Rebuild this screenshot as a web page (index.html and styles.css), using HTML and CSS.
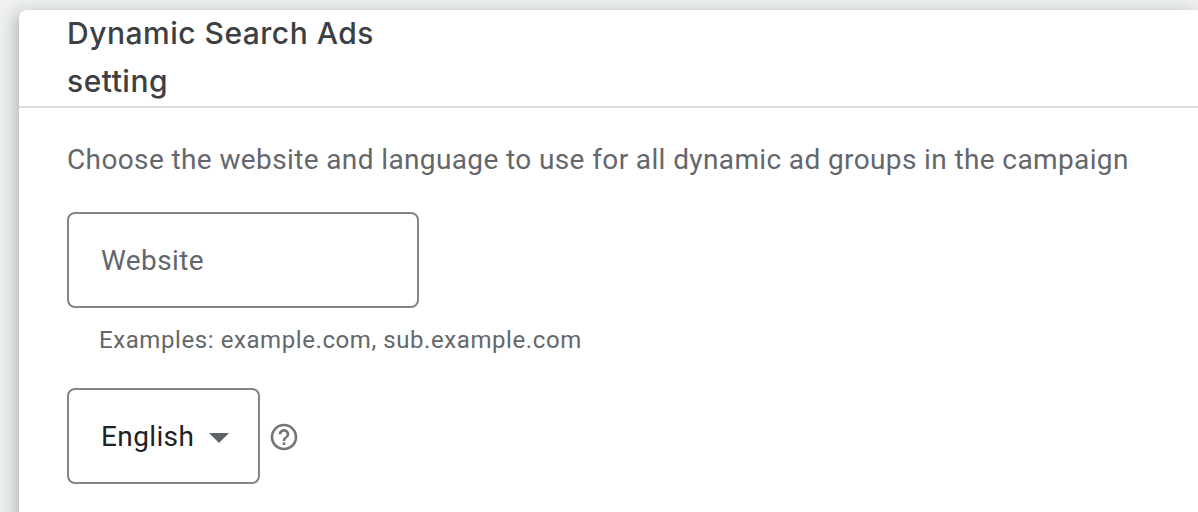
FILE: index.html
```html
<!DOCTYPE html>
<html>
    <head>
        <meta charset="utf-8">
        <title>Dynamic Search Ads setting</title>
        <link rel="stylesheet" href="styles.css">
    </head>
    <body>
        <div class="card">
            <div class="card-header">
                <h2>Dynamic Search Ads<br>setting</h2>
            </div>
            <div class="card-body">
                <p class="desc">Choose the website and language to use for all dynamic ad groups in the campaign</p>
                <div class="field website">Website</div>
                <p class="hint">Examples: example.com, sub.example.com</p>
                <div class="lang-row">
                    <div class="field select">
                        <span>English</span>
                        <span class="arrow"></span>
                    </div>
                    <svg class="help" width="32" height="32" viewBox="0 0 24 24">
                        <path fill="#757575" d="M11 18h2v-2h-2v2zm1-16C6.48 2 2 6.48 2 12s4.48 10 10 10 10-4.48 10-10S17.52 2 12 2zm0 18c-4.41 0-8-3.59-8-8s3.59-8 8-8 8 3.59 8 8-3.59 8-8 8zm0-14c-2.21 0-4 1.79-4 4h2c0-1.1.9-2 2-2s2 .9 2 2c0 2-3 1.75-3 5h2c0-2.25 3-2.5 3-5 0-2.21-1.79-4-4-4z"/>
                    </svg>
                </div>
            </div>
        </div>
    </body>
</html>
```

FILE: styles.css
```css
html, body {
    height: 100%;
}
body {
    margin: 0;
    overflow: hidden;
    background: #eef0f1;
    font-family: Roboto, "Liberation Sans", sans-serif;
    color: #63676c;
}
.card {
    margin: 10px 0 0 19px;
    height: 520px;
    background: #fff;
    border-radius: 8px 0 0 8px;
    box-shadow: -4px 3px 16px 0 rgba(60,64,67,0.32);
}
.card-header {
    display: flow-root;
    padding: 0 48px;
    height: 96px;
    border-bottom: 2px solid #dadce0;
}
.card-header h2 {
    margin: -1px 0 0;
    font-family: Inter, sans-serif;
    font-size: 30px;
    font-weight: 500;
    line-height: 48px;
    letter-spacing: 0.5px;
    color: #3c4043;
}
.card-body {
    padding: 0 48px;
}
.desc {
    margin: 0;
    padding-top: 32px;
    font-size: 28px;
    line-height: 40px;
    letter-spacing: 0.38px;
}
.field {
    box-sizing: border-box;
    height: 96px;
    border: 2px solid #80868b;
    border-radius: 8px;
    font-size: 28px;
    line-height: 94px;
    letter-spacing: 0.38px;
}
.website {
    width: 352px;
    margin-top: 32px;
    padding-left: 32px;
}
.hint {
    margin: 0;
    padding: 16px 0 0 32px;
    font-size: 24px;
    line-height: 32px;
    letter-spacing: 0.58px;
}
.lang-row {
    display: flex;
    align-items: center;
    margin-top: 32px;
}
.select {
    display: flex;
    align-items: center;
    width: 193px;
    padding: 2px 0 0 32px;
    color: #202124;
}
.arrow {
    margin-left: 15px;
    margin-top: 1px;
    border-left: 10px solid transparent;
    border-right: 10px solid transparent;
    border-top: 10px solid #5f6368;
}
.help {
    margin: 2px 0 0 8px;
}
```
